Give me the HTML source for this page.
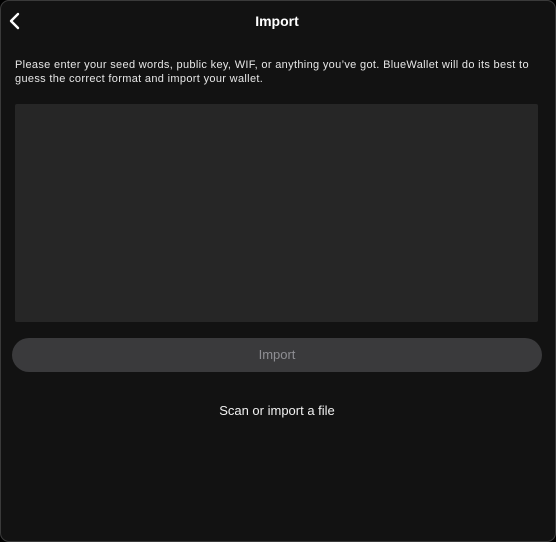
<!DOCTYPE html>
<html><head><meta charset="utf-8"><style>
html,body{margin:0;padding:0;width:556px;height:542px;background:#000;overflow:hidden;font-family:"Liberation Sans",sans-serif}
.win{position:absolute;left:0;top:0;width:554px;height:540px;border:1px solid #3a3a3a;border-radius:9px;background:#121212}
.title{position:absolute;top:12px;left:-1px;width:554px;text-align:center;color:#fff;font-weight:bold;font-size:14px}
.back{position:absolute;left:7px;top:11px}
.desc{position:absolute;left:14px;top:58px;width:528px;color:#e6e6e6;font-size:11px;line-height:13.5px;letter-spacing:0.33px}
.ta{position:absolute;left:14px;top:103px;width:523px;height:218px;background:#262626;border-radius:2px}
.btn{position:absolute;left:11px;top:337px;width:530px;height:34px;background:#3a3a3c;border-radius:17px;color:#8e8e93;font-size:13px;line-height:34px;text-align:center}
.scan{position:absolute;top:402px;left:-1px;width:554px;text-align:center;color:#f0f0f0;font-size:13px}
</style></head><body>
<div class="win">
<svg class="back" width="14" height="18" viewBox="0 0 14 18"><path d="M10 2 L3 9 L10 16" fill="none" stroke="#fff" stroke-width="2.4" stroke-linecap="round" stroke-linejoin="round"/></svg>
<div class="title">Import</div>
<div class="desc">Please enter your seed words, public key, WIF, or anything you’ve got. BlueWallet will do its best to guess the correct format and import your wallet.</div>
<div class="ta"></div>
<div class="btn">Import</div>
<div class="scan">Scan or import a file</div>
</div>
</body></html>
